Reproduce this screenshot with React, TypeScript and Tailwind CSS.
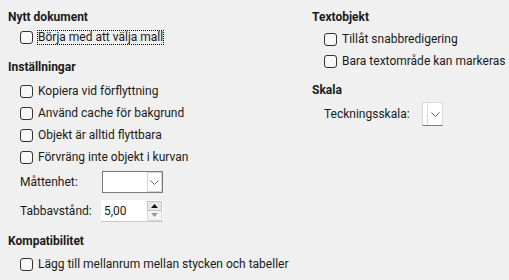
import React from 'react';

// Kryssruta i Windows-stil
function Kryss({ text, fokus = false }: { text: string; fokus?: boolean }) {
  return (
    <div className="flex items-center h-[20px] pl-3 whitespace-nowrap">
      <span className="w-[13px] h-[13px] rounded-[3px] border border-[#333333] bg-[#f7f7f7] shrink-0" />
      <span
        className={
          fokus
            ? 'ml-[4px] px-[1px] leading-[15px] outline outline-1 outline-dotted outline-[#000] -outline-offset-1'
            : 'ml-[5px]'
        }
      >
        {text}
      </span>
    </div>
  );
}

function Rubrik({ text, className = '' }: { text: string; className?: string }) {
  return <div className={`flex items-center h-[20px] font-bold whitespace-nowrap ${className}`}>{text}</div>;
}

function Pil() {
  return (
    <svg width="9" height="5" viewBox="0 0 9 5" fill="none">
      <path d="M0.5 0.5 L4.5 4.5 L8.5 0.5" stroke="#666" strokeWidth="1" />
    </svg>
  );
}

export default function App() {
  return (
    <div
      className="w-[509px] h-[280px] bg-[#f0f0f0] text-[12px] text-[#1a1a1a] flex overflow-hidden"
      style={{ fontFamily: 'Roboto, "Noto Sans", sans-serif' }}
    >
      {/* Vänster kolumn */}
      <div className="w-[312px] shrink-0 pl-2 pt-[7px] flex flex-col">
        <Rubrik text="Nytt dokument" />
        <Kryss text="Börja med att välja mall" fokus />
        <Rubrik text="Inställningar" className="mt-[10px]" />
        <div className="mt-[4px]">
          <Kryss text="Kopiera vid förflyttning" />
        </div>
        <div className="mt-[2px]">
          <Kryss text="Använd cache för bakgrund" />
        </div>
        <div className="mt-[2px]">
          <Kryss text="Objekt är alltid flyttbara" />
        </div>
        <div className="mt-[2px]">
          <Kryss text="Förvräng inte objekt i kurvan" />
        </div>

        <div className="mt-[4px] flex items-center h-[22px] pl-3">
          <span className="w-[82px] shrink-0">Måttenhet:</span>
          <div className="w-[61px] h-[22px] bg-white border border-[#7a7a7a] flex justify-end items-stretch">
            <div className="w-[15px] border border-[#d4d4d4] bg-white flex items-center justify-center">
              <Pil />
            </div>
          </div>
        </div>

        <div className="mt-[7px] flex items-center h-[22px] pl-3">
          <span className="w-[81px] shrink-0">Tabbavstånd:</span>
          <div className="w-[62px] h-[22px] bg-white border-b border-[#c8c8c8] flex items-center">
            <span className="pl-[3px] flex-1">5,00</span>
            <div className="w-[15px] h-[20px] flex flex-col mr-[1px]">
              <div className="flex-1 bg-[#e8e8e8] border border-[#c4c4c4] flex items-center justify-center">
                <svg width="7" height="4" viewBox="0 0 7 4">
                  <path d="M0 4 L3.5 0 L7 4 Z" fill="#111" />
                </svg>
              </div>
              <div className="flex-1 bg-[#f4f4f4] border border-t-0 border-[#d8d8d8] flex items-center justify-center">
                <svg width="7" height="4" viewBox="0 0 7 4">
                  <path d="M0 0 L3.5 4 L7 0 Z" fill="#9a9a9a" />
                </svg>
              </div>
            </div>
          </div>
        </div>

        <Rubrik text="Kompatibilitet" className="mt-[9px]" />
        <div className="mt-[3px]">
          <Kryss text="Lägg till mellanrum mellan stycken och tabeller" />
        </div>
      </div>

      {/* Höger kolumn */}
      <div className="flex-1 pt-[7px] flex flex-col">
        <Rubrik text="Textobjekt" />
        <div className="mt-[2px]">
          <Kryss text="Tillåt snabbredigering" />
        </div>
        <div className="mt-[2px]">
          <Kryss text="Bara textområde kan markeras" />
        </div>
        <Rubrik text="Skala" className="mt-[9px]" />
        <div className="mt-[2px] flex items-center h-[24px] pl-3">
          <span className="w-[98px] shrink-0">Teckningsskala:</span>
          <div className="w-[21px] h-[24px] bg-white border border-[#d9d9d9] border-b-[#7a7a7a] flex justify-end">
            <div className="w-[15px] border-l border-[#d9d9d9] flex items-center justify-center">
              <Pil />
            </div>
          </div>
        </div>
      </div>
    </div>
  );
}
